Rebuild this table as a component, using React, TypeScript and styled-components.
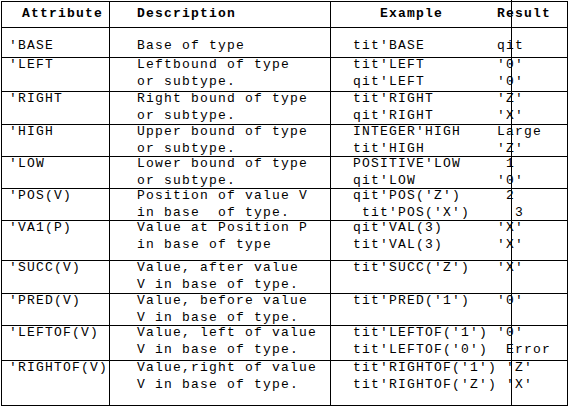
import React from 'react';
import styled, { createGlobalStyle } from 'styled-components';

const GlobalStyle = createGlobalStyle`
  html, body { margin: 0; padding: 0; background: #fff; }
`;

const Page = styled.div`
  padding: 1px 0 0 1px;
`;

const Table = styled.div`
  position: relative;
  width: 567px;
  box-sizing: border-box;
  border: 1px solid #000;
  font-family: "Liberation Mono", "Courier New", monospace;
  font-size: 13px;
  letter-spacing: 1.2px;
  color: #000;
`;

const Row = styled.div<{ $height: number; $last?: boolean }>`
  display: grid;
  grid-template-columns: 107px 221px 237px;
  height: ${(p) => p.$height}px;
  border-bottom: ${(p) => (p.$last ? 'none' : '1px solid #000')};
`;

const Cell = styled.div<{ $pad: number; $top: number; $bold?: boolean }>`
  box-sizing: border-box;
  padding-left: ${(p) => p.$pad}px;
  padding-top: ${(p) => p.$top}px;
  font-weight: ${(p) => (p.$bold ? 700 : 400)};
  white-space: pre;
  & + & {
    border-left: 1px solid #000;
  }
`;

const Line = styled.div`
  display: flex;
  align-items: flex-start;
  height: 17px;
  line-height: 13px;
  white-space: pre;
`;

const ExampleText = styled.span`
  width: 144px;
  flex: none;
  white-space: pre;
`;

const ResultText = styled.span`
  white-space: pre;
`;

const MidRule = styled.div`
  position: absolute;
  left: 509px;
  top: -2px;
  bottom: -1px;
  width: 1px;
  background: #000;
`;

type RowData = {
  attr: string;
  desc: string[];
  ex: [string, string][];
  height: number;
};

const rows: RowData[] = [
  { attr: "'LEFT", height: 33, desc: ['Leftbound of type', 'or subtype.'], ex: [["tit'LEFT", "'0'"], ["qit'LEFT", "'0'"]] },
  { attr: "'RIGHT", height: 32, desc: ['Right bound of type', 'or subtype.'], ex: [["tit'RIGHT", "'Z'"], ["qit'RIGHT", "'X'"]] },
  { attr: "'HIGH", height: 31, desc: ['Upper bound of type', 'or subtype.'], ex: [["INTEGER'HIGH", 'Large'], ["tit'HIGH", "'Z'"]] },
  { attr: "'LOW", height: 31, desc: ['Lower bound of type', 'or subtype.'], ex: [["POSITIVE'LOW", ' 1'], ["qit'LOW", "'0'"]] },
  { attr: "'POS(V)", height: 31, desc: ['Position of value V', 'in base  of type.'], ex: [["qit'POS('Z')", ' 2'], [" tit'POS('X')", '  3']] },
  { attr: "'VA1(P)", height: 39, desc: ['Value at Position P', 'in base of type'], ex: [["qit'VAL(3)", "'X'"], ["tit'VAL(3)", "'X'"]] },
  { attr: "'SUCC(V)", height: 32, desc: ['Value, after value', 'V in base of type.'], ex: [["tit'SUCC('Z')", "'X'"]] },
  { attr: "'PRED(V)", height: 31, desc: ['Value, before value', 'V in base of type.'], ex: [["tit'PRED('1')", "'0'"]] },
  { attr: "'LEFTOF(V)", height: 34, desc: ['Value, left of value', 'V in base of type.'], ex: [["tit'LEFTOF('1')", "'0'"], ["tit'LEFTOF('0')", ' Error']] },
  { attr: "'RIGHTOF(V)", height: 44, desc: ['Value,right of value', 'V in base of type.'], ex: [["tit'RIGHTOF('1')", " 'Z'"], ["tit'RIGHTOF('Z')", " 'X'"]] },
];

export default function App() {
  return (
    <>
      <GlobalStyle />
      <Page>
        <Table>
          <Row $height={25}>
            <Cell $pad={20} $top={5} $bold>
              <Line>Attribute</Line>
            </Cell>
            <Cell $pad={27} $top={5} $bold>
              <Line>Description</Line>
            </Cell>
            <Cell $pad={22} $top={5} $bold>
              <Line>
                <ExampleText>{'   Example'}</ExampleText>
                <ResultText>Result</ResultText>
              </Line>
            </Cell>
          </Row>
          <Row $height={29}>
            <Cell $pad={7} $top={11}>
              <Line>'BASE</Line>
            </Cell>
            <Cell $pad={27} $top={11}>
              <Line>Base of type</Line>
            </Cell>
            <Cell $pad={22} $top={11}>
              <Line>
                <ExampleText>tit'BASE</ExampleText>
                <ResultText>qit</ResultText>
              </Line>
            </Cell>
          </Row>
          {rows.map((r, i) => (
            <Row key={r.attr} $height={r.height} $last={i === rows.length - 1}>
              <Cell $pad={7} $top={0}>
                <Line>{r.attr}</Line>
              </Cell>
              <Cell $pad={27} $top={0}>
                {r.desc.map((d) => (
                  <Line key={d}>{d}</Line>
                ))}
              </Cell>
              <Cell $pad={22} $top={0}>
                {r.ex.map(([e, res]) => (
                  <Line key={e}>
                    <ExampleText>{e}</ExampleText>
                    <ResultText>{res}</ResultText>
                  </Line>
                ))}
              </Cell>
            </Row>
          ))}
          <MidRule />
        </Table>
      </Page>
    </>
  );
}
